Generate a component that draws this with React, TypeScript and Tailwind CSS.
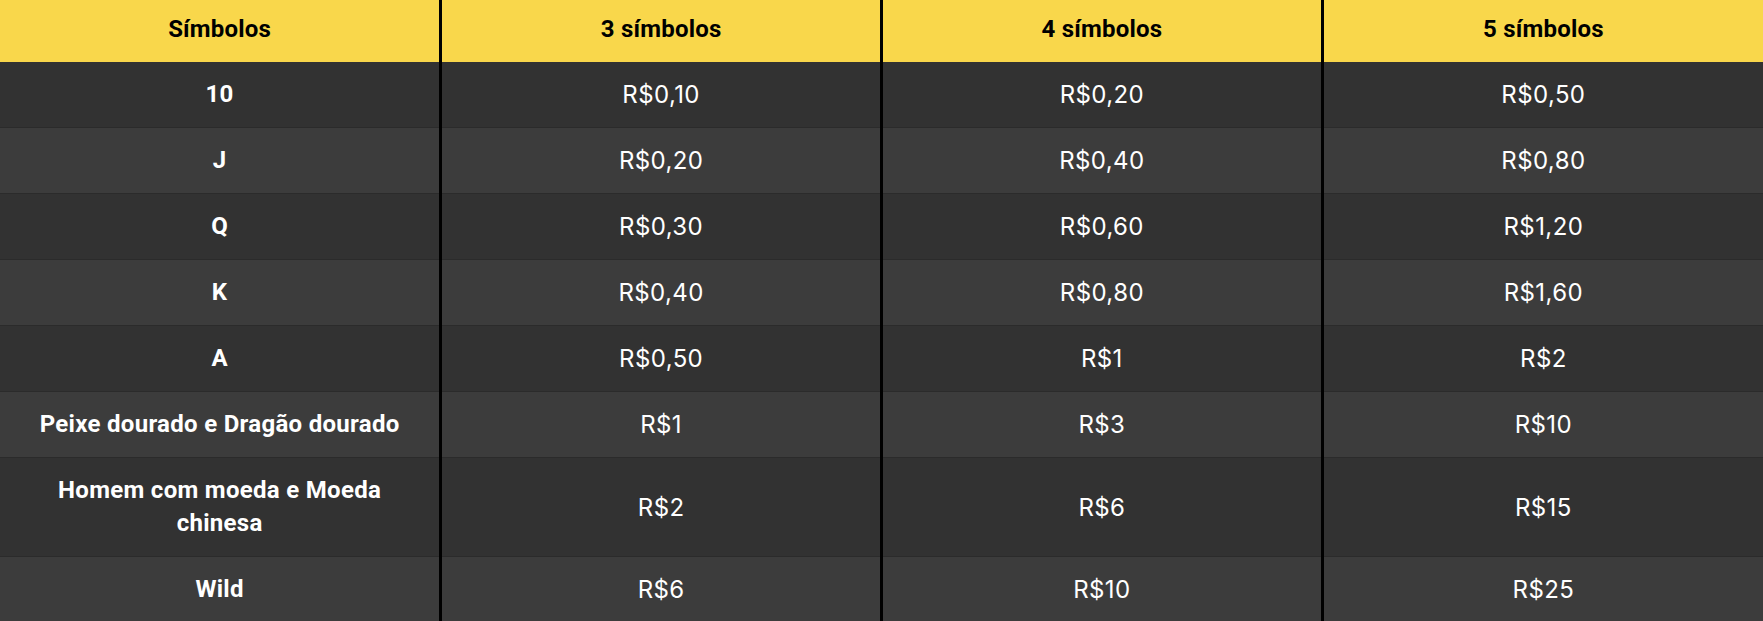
const headers = ["Símbolos", "3 símbolos", "4 símbolos", "5 símbolos"];

const rows = [
  { symbol: "10", pays: ["R$0,10", "R$0,20", "R$0,50"] },
  { symbol: "J", pays: ["R$0,20", "R$0,40", "R$0,80"] },
  { symbol: "Q", pays: ["R$0,30", "R$0,60", "R$1,20"] },
  { symbol: "K", pays: ["R$0,40", "R$0,80", "R$1,60"] },
  { symbol: "A", pays: ["R$0,50", "R$1", "R$2"] },
  { symbol: "Peixe dourado e Dragão dourado", pays: ["R$1", "R$3", "R$10"] },
  { symbol: "Homem com moeda e Moeda chinesa", pays: ["R$2", "R$6", "R$15"] },
  { symbol: "Wild", pays: ["R$6", "R$10", "R$25"] },
];

export default function App() {
  return (
    <div className="w-full bg-[#323232]">
      <table className="w-full table-fixed border-collapse text-center">
        <thead>
          <tr className="bg-[#f9d74b]">
            {headers.map((h) => (
              <th
                key={h}
                className="h-[62px] px-4 pb-[3px] border-x-[3px] border-black first:border-l-0 last:border-r-0 text-[24px] font-bold text-black leading-[33px] tracking-[0.2px] font-['Roboto',sans-serif]"
              >
                {h}
              </th>
            ))}
          </tr>
        </thead>
        <tbody>
          {rows.map((r, i) => (
            <tr
              key={r.symbol}
              className={`border-b border-[#2b2b2b] ${i % 2 === 0 ? "bg-[#323232]" : "bg-[#3c3c3c]"}`}
            >
              <td className="py-4 px-6 border-r-[3px] border-black text-[24px] font-bold text-white leading-[33px] tracking-[0.3px] font-['Roboto',sans-serif]">
                {r.symbol}
              </td>
              {r.pays.map((p, j) => (
                <td
                  key={j}
                  className="py-4 px-4 border-x-[3px] border-black last:border-r-0 text-[24px] text-white leading-[33px] tracking-[0.4px] font-['Inter',sans-serif]"
                >
                  {p}
                </td>
              ))}
            </tr>
          ))}
        </tbody>
      </table>
    </div>
  );
}
